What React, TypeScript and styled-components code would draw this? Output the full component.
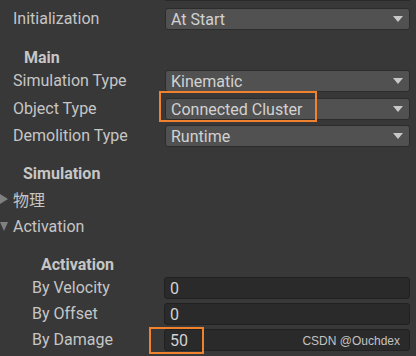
import styled, { createGlobalStyle } from "styled-components";

const GlobalStyle = createGlobalStyle`
  html, body {
    margin: 0;
    padding: 0;
    background: #383838;
  }
  body {
    font-family: Roboto, "Noto Sans CJK SC", sans-serif;
    color: #c6c6c6;
  }
`;

const Panel = styled.div`
  width: 416px;
  height: 356px;
  overflow: hidden;
  background: #383838;
  display: flex;
  flex-direction: column;
`;

const Stub = styled.div`
  margin-left: 165px;
  width: 245px;
  height: 1px;
  background: #2a2a2a;
  flex-shrink: 0;
`;

const Row = styled.div<{ $top: number; $height?: number }>`
  display: flex;
  align-items: center;
  margin-top: ${(p) => p.$top}px;
  height: ${(p) => p.$height ?? 22}px;
  padding-right: 6px;
  flex-shrink: 0;
`;

const Label = styled.div<{ $indent: number }>`
  flex: 1;
  padding-left: ${(p) => p.$indent}px;
  font-size: 16px;
  line-height: 22px;
  white-space: nowrap;
`;

const Header = styled.div<{ $indent: number; $top: number }>`
  margin-top: ${(p) => p.$top}px;
  height: 20px;
  line-height: 20px;
  padding-left: ${(p) => p.$indent}px;
  font-size: 16px;
  font-weight: 700;
  flex-shrink: 0;
`;

const Foldout = styled.div<{ $top: number }>`
  display: flex;
  align-items: center;
  gap: 5px;
  margin-top: ${(p) => p.$top}px;
  height: 26px;
  font-size: 16px;
  flex-shrink: 0;
`;

const Arrow = styled.span<{ $open?: boolean }>`
  width: 0;
  height: 0;
  ${(p) =>
    p.$open
      ? `border-left: 4px solid transparent;
         border-right: 4px solid transparent;
         border-top: 9px solid #808080;`
      : `border-top: 5px solid transparent;
         border-bottom: 5px solid transparent;
         border-left: 8px solid #808080;`}
`;

const Dropdown = styled.div`
  position: relative;
  box-sizing: border-box;
  width: 245px;
  height: 22px;
  background: #515151;
  border: 1px solid #2c2c2c;
  border-radius: 3px;
  display: flex;
  align-items: center;
  padding: 0 6px 0 5px;
  font-size: 16px;
  color: #d2d2d2;
`;

const DropText = styled.span`
  flex: 1;
  white-space: nowrap;
`;

const Caret = styled.span`
  width: 0;
  height: 0;
  border-left: 5px solid transparent;
  border-right: 5px solid transparent;
  border-top: 6px solid #c8c8c8;
`;

const NumberField = styled.div`
  position: relative;
  box-sizing: border-box;
  width: 246px;
  height: 22px;
  background: #2a2a2a;
  border: 1px solid #212121;
  border-radius: 3px;
  display: flex;
  align-items: center;
  padding-left: 5px;
  font-size: 16px;
  color: #d2d2d2;
`;

const Highlight = styled.div<{ $l: number; $t: number; $w: number; $h: number }>`
  position: absolute;
  left: ${(p) => p.$l}px;
  top: ${(p) => p.$t}px;
  width: ${(p) => p.$w}px;
  height: ${(p) => p.$h}px;
  box-sizing: border-box;
  border: 2px solid #f0812d;
  pointer-events: none;
`;

const Watermark = styled.span`
  position: absolute;
  right: 9px;
  top: 2px;
  font-family: "Liberation Sans", Arial, sans-serif;
  font-size: 12px;
  line-height: 18px;
  color: #c2c2c2;
`;

const Select = ({ value, children }: { value: string; children?: React.ReactNode }) => (
  <Dropdown>
    <DropText>{value}</DropText>
    <Caret />
    {children}
  </Dropdown>
);

export default function App() {
  return (
    <>
      <GlobalStyle />
      <Panel>
        <Stub />
        <Row $top={7}>
          <Label $indent={13}>Initialization</Label>
          <Select value="At Start" />
        </Row>

        <Header $indent={24} $top={18}>Main</Header>
        <Row $top={2}>
          <Label $indent={13}>Simulation Type</Label>
          <Select value="Kinematic" />
        </Row>
        <Row $top={6}>
          <Label $indent={13}>Object Type</Label>
          <Select value="Connected Cluster">
            <Highlight $l={-7} $t={-8} $w={158} $h={31} />
          </Select>
        </Row>
        <Row $top={5}>
          <Label $indent={13}>Demolition Type</Label>
          <Select value="Runtime" />
        </Row>

        <Header $indent={23} $top={17}>Simulation</Header>
        <Foldout $top={2}>
          <Arrow />
          <span>物理</span>
        </Foldout>
        <Foldout $top={1}>
          <Arrow $open />
          <span>Activation</span>
        </Foldout>

        <Header $indent={41} $top={16}>Activation</Header>
        <Row $top={2}>
          <Label $indent={32}>By Velocity</Label>
          <NumberField>0</NumberField>
        </Row>
        <Row $top={4}>
          <Label $indent={32}>By Offset</Label>
          <NumberField>0</NumberField>
        </Row>
        <Row $top={4}>
          <Label $indent={32}>By Damage</Label>
          <NumberField>
            50
            <Highlight $l={-16} $t={-3} $w={55} $h={27} />
            <Watermark>CSDN @Ouchdex</Watermark>
          </NumberField>
        </Row>
      </Panel>
    </>
  );
}
